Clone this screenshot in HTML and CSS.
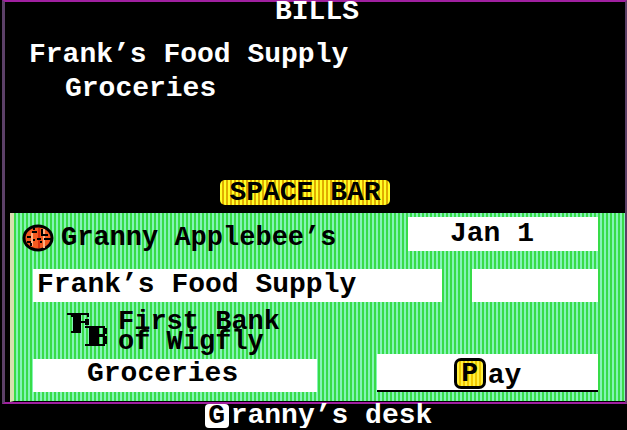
FILE: index.html
```html
<!DOCTYPE html>
<html lang="en">
<head>
    <meta charset="UTF-8">
    <meta name="viewport" content="width=device-width, initial-scale=1.0">
    <title>Granny's desk</title>
    <link rel="stylesheet" href="styles.css">
</head>
<body>
    <main class="screen">
        <section class="bills">
            <h1>BILLS</h1>
            <p class="vendor">Frank’s Food Supply</p>
            <p class="item">Groceries</p>
            <button class="space-bar" type="button">SPACE BAR</button>
        </section>

        <form class="check">
            <div class="row">
                <div class="owner">
                    <svg class="apple" viewBox="0 0 32 28" aria-hidden="true">
                        <ellipse cx="16" cy="14" rx="14" ry="12" fill="#f45a20" stroke="#000" stroke-width="3"/>
                        <path d="M10 9V22M22 5V24" stroke="#ffb080" stroke-width="2"/>
                        <path d="M17 4V24" stroke="#d83010" stroke-width="2"/>
                        <path d="M10 8H15M5 13H9M5 18H9M9 22V19M12 15V17M20 5V11H26M15 15H19M22 15H29M19 17V19M12 4V6" fill="none" stroke="#000" stroke-width="2"/>
                    </svg>
                    <span>Granny Applebee’s</span>
                </div>
                <input class="date" type="text" value="Jan 1" aria-label="Date">
            </div>
            <div class="row payee-row">
                <input class="payee" type="text" value="Frank’s Food Supply" aria-label="Payee">
                <input class="amount" type="text" aria-label="Amount">
            </div>
            <div class="bank">
                <svg class="bank-logo" viewBox="0 0 42 36" aria-hidden="true">
                    <path d="M0 1H22V5H20V3H14V9H18V7H22V13H18V11H14V19H14V21H4V19H6V5H4V3H0Z"/>
                    <path fill-rule="evenodd" d="M18 14H38V16H40V22H38V24H40V32H38V34H18V32H22V16H18ZM32 16H36V22H32ZM32 25H36V32H32Z"/>
                </svg>
                <p>First Bank<br>of Wigfly</p>
            </div>
            <div class="row memo-row">
                <input class="memo" type="text" value="Groceries" aria-label="Memo">
                <button class="pay" type="button"><span class="key">P</span><span>ay</span></button>
            </div>
        </form>
    </main>
    <footer>
        <button class="desk" type="button"><span class="desk-key">G</span>ranny’s desk</button>
    </footer>
</body>
</html>
```
FILE: styles.css
```css
* {
    box-sizing: border-box;
}
body {
    margin: 0;
    background-color: #000;
    color: #fff;
    font-family: "Liberation Mono", monospace;
    font-size: 28px;
    font-weight: bold;
    line-height: 34px;
}
h1, p {
    margin: 0;
}
h1 {
    font-size: 28px;
}
input, button {
    font: inherit;
    color: #000;
    border: none;
    border-radius: 0;
    padding: 0;
    min-width: 0;
}
button {
    cursor: pointer;
}
.screen {
    margin-left: 2px;
    border: 2px solid #a020a0;
    border-left: 3px solid #5c4068;
    border-right-color: #5c4068;
}
.bills {
    display: flex;
    flex-direction: column;
    height: 211px;
    padding: 0 44px 8px 24px;
}
.bills h1 {
    line-height: 20px;
    text-align: center;
    margin-bottom: 16px;
    padding-left: 24px;
}
.item {
    padding-left: 36px;
}
.space-bar {
    align-self: center;
    margin-top: auto;
    height: 25px;
    padding: 0 9px;
    line-height: 25px;
    border-radius: 5px;
    background: repeating-linear-gradient(90deg, #ffff28 0 2px, #e0ac00 2px 4px);
}
.check {
    margin-left: 5px;
    padding: 4px 27px 9px 19px;
    color: #000;
    border-left: 4px solid #d8e0b0;
    border-bottom: 1px solid #000;
    background: repeating-linear-gradient(90deg, #38dc48 0 2px, #84f4b8 2px 4px);
}
.row {
    display: flex;
    justify-content: space-between;
}
.owner {
    display: flex;
    align-items: center;
    gap: 7px;
    margin-left: -11px;
    padding-top: 4px;
    font-size: 27px;
}
.apple {
    width: 32px;
    height: 28px;
}
.row input {
    height: 33px;
    background-color: #fff;
}
.row .date {
    width: 190px;
    height: 34px;
    padding-right: 22px;
    text-align: center;
}
.payee-row {
    margin-top: 14px;
    gap: 30px;
}
.row .payee {
    flex: 1;
    padding: 0 0 2px 4px;
}
.amount {
    width: 126px;
}
.bank {
    display: flex;
    gap: 9px;
    height: 52px;
    padding: 10px 0 0 34px;
    font-size: 27px;
}
.bank-logo {
    width: 42px;
    height: 36px;
}
.bank p {
    line-height: 20px;
}
.memo-row {
    align-items: flex-end;
}
.row .memo {
    width: 284px;
    padding: 0 0 4px 54px;
}
.pay {
    display: flex;
    justify-content: center;
    align-items: flex-end;
    gap: 2px;
    width: 221px;
    height: 38px;
    padding-bottom: 1px;
    line-height: 26px;
    background-color: #fff;
    border-bottom: 2px solid #000;
}
.key {
    width: 32px;
    height: 31px;
    line-height: 25px;
    border: 3px solid #000;
    border-radius: 7px;
    background: repeating-linear-gradient(90deg, #fff040 0 2px, #f0c800 2px 4px);
}
footer {
    padding-left: 10px;
    text-align: center;
    line-height: 24px;
}
.desk {
    display: inline-flex;
    gap: 2px;
    height: 24px;
    line-height: 24px;
    color: #fff;
    background: none;
}
.desk-key {
    width: 24px;
    height: 24px;
    border-radius: 4px;
    color: #000;
    background-color: #fff;
}
```
